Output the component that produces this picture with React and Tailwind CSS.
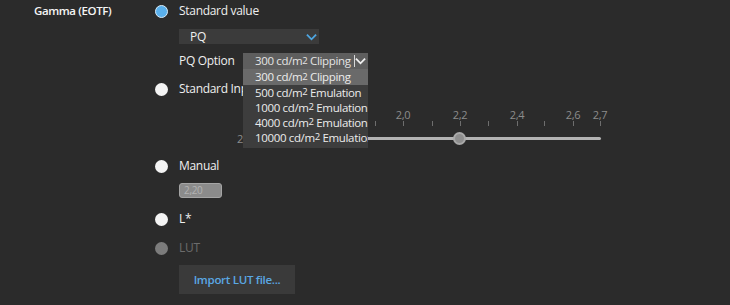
import React from "react";

function Radio({ checked = false, disabled = false }) {
    if (checked) {
        return <span className="size-[13px] shrink-0 rounded-full bg-[#5ab0ec] border-[1.5px] border-[#d6ecfb]" />;
    }
    return (
        <span
            className={
                disabled
                    ? "size-[13px] shrink-0 rounded-full bg-[#7c7c7c]"
                    : "size-[13px] shrink-0 rounded-full bg-[#f4f4f4]"
            }
        />
    );
}

function Chevron({ className }) {
    return (
        <svg viewBox="0 0 12 8" className={className} fill="none" stroke="currentColor" strokeWidth="2">
            <path d="M1 1.5l5 5 5-5" />
        </svg>
    );
}

function Cd({ n, rest }) {
    return (
        <span className="whitespace-nowrap">
            {n} cd/m<sup className="text-[9.5px] relative -top-[1.5px]">2</sup> {rest}
        </span>
    );
}

const options = [
    ["300", "Clipping"],
    ["500", "Emulation"],
    ["1000", "Emulation"],
    ["4000", "Emulation"],
    ["10000", "Emulation"]
];

// tick positions relative to slider container (x = 155 at left)
const ticks = [220, 248, 277, 305, 333, 362, 389, 418, 445];
const tickLabels = [
    ["2,0", 248],
    ["2,2", 305],
    ["2,4", 362],
    ["2,6", 418],
    ["2,7", 445]
];

export default function App() {
    return (
        <div className="w-[730px] h-[305px] bg-[#2b2b2b] flex text-[12px] tracking-[-0.3px] text-[#efefef] font-['Open_Sans',sans-serif] overflow-hidden">
            {/* Label column */}
            <div className="w-[155px] shrink-0 pl-[34px] h-[22px] flex items-center font-semibold text-[11.5px] tracking-[-0.4px] text-[#f5f5f5]">
                Gamma (EOTF)
            </div>

            <div className="flex flex-col w-[575px]">
                {/* Standard value */}
                <div className="h-[22px] flex items-center gap-[11px]">
                    <Radio checked />
                    <span>Standard value</span>
                </div>

                <div className="mt-[7px] ml-[24px] w-[140px] h-[15px] bg-[#3b3b3b] flex items-center justify-between pl-[11px] pr-[2px]">
                    <span>PQ</span>
                    <Chevron className="w-[11px] h-[8px] text-[#4ea6e2]" />
                </div>

                {/* PQ option */}
                <div className="mt-[9px] ml-[24px] h-[16px] flex items-center relative z-10">
                    <span className="w-[64px]">PQ Option</span>
                    <div className="relative w-[125px] text-[11.5px] tracking-[-0.35px]">
                        <div className="h-[16px] bg-[#5e5e5e] flex items-center pl-[12px] pr-[2px] text-[#e4e4e4] overflow-hidden">
                            <Cd n="300" rest="Clipping" />
                            <span className="ml-[3px] w-[1px] h-[12px] shrink-0 bg-[#d8d8d8]" />
                            <Chevron className="ml-auto shrink-0 w-[11px] h-[8px] text-[#f0f0f0]" />
                        </div>
                        <ul className="absolute left-0 top-[16px] w-[125px] bg-[#3d3d3d] pb-[3px] overflow-hidden text-[#ececec]">
                            {options.map(([n, rest], i) => (
                                <li
                                    key={n}
                                    className={
                                        i === 0
                                            ? "h-[16px] flex items-center pl-[12px] bg-[#6a6a6a]"
                                            : "h-[15px] flex items-center pl-[12px]"
                                    }
                                >
                                    <Cd n={n} rest={rest} />
                                </li>
                            ))}
                        </ul>
                    </div>
                </div>

                {/* Standard input */}
                <div className="mt-[10px] h-[20px] flex items-center gap-[11px]">
                    <Radio />
                    <span>Standard Input</span>
                </div>

                {/* Slider */}
                <div className="h-[51px] relative">
                    {tickLabels.map(([t, x]) => (
                        <span
                            key={t}
                            className="absolute top-[8px] -translate-x-1/2 text-[11px] text-[#8c8c8c]"
                            style={{ left: x }}
                        >
                            {t}
                        </span>
                    ))}
                    {ticks.map((x) => (
                        <span key={x} className="absolute top-[22px] w-[1px] h-[5px] bg-[#6e6e6e]" style={{ left: x }} />
                    ))}
                    <span className="absolute left-[82px] top-[32px] text-[11px] text-[#8c8c8c]">2,20</span>
                    <div className="absolute left-[106px] w-[340px] top-[38px] h-[3px] rounded-full bg-[#b3b3b3]" />
                    <div className="absolute left-[298px] top-[33px] size-[13px] rounded-full bg-[#8e8e8e] border-2 border-[#a9a9a9]" />
                </div>

                {/* Manual */}
                <div className="mt-[6px] h-[20px] flex items-center gap-[11px]">
                    <Radio />
                    <span>Manual</span>
                </div>
                <div className="mt-[7px] ml-[24px] w-[43px] h-[15px] rounded-[3px] bg-[#8b8b8b] border border-[#a5a5a5] flex items-center pl-[4px] text-[10px] text-[#b3b3b3]">
                    2,20
                </div>

                {/* L* */}
                <div className="mt-[11px] h-[20px] flex items-center gap-[11px]">
                    <Radio />
                    <span>L*</span>
                </div>

                {/* LUT */}
                <div className="mt-[9px] h-[20px] flex items-center gap-[11px]">
                    <Radio disabled />
                    <span className="text-[#6c6c6c]">LUT</span>
                </div>
                <button className="mt-[7px] ml-[24px] w-[116px] h-[29px] bg-[#3a3a3a] text-[#5aa8e4] text-[11.5px] tracking-[-0.3px] font-semibold">
                    Import LUT file...
                </button>
            </div>
        </div>
    );
}
